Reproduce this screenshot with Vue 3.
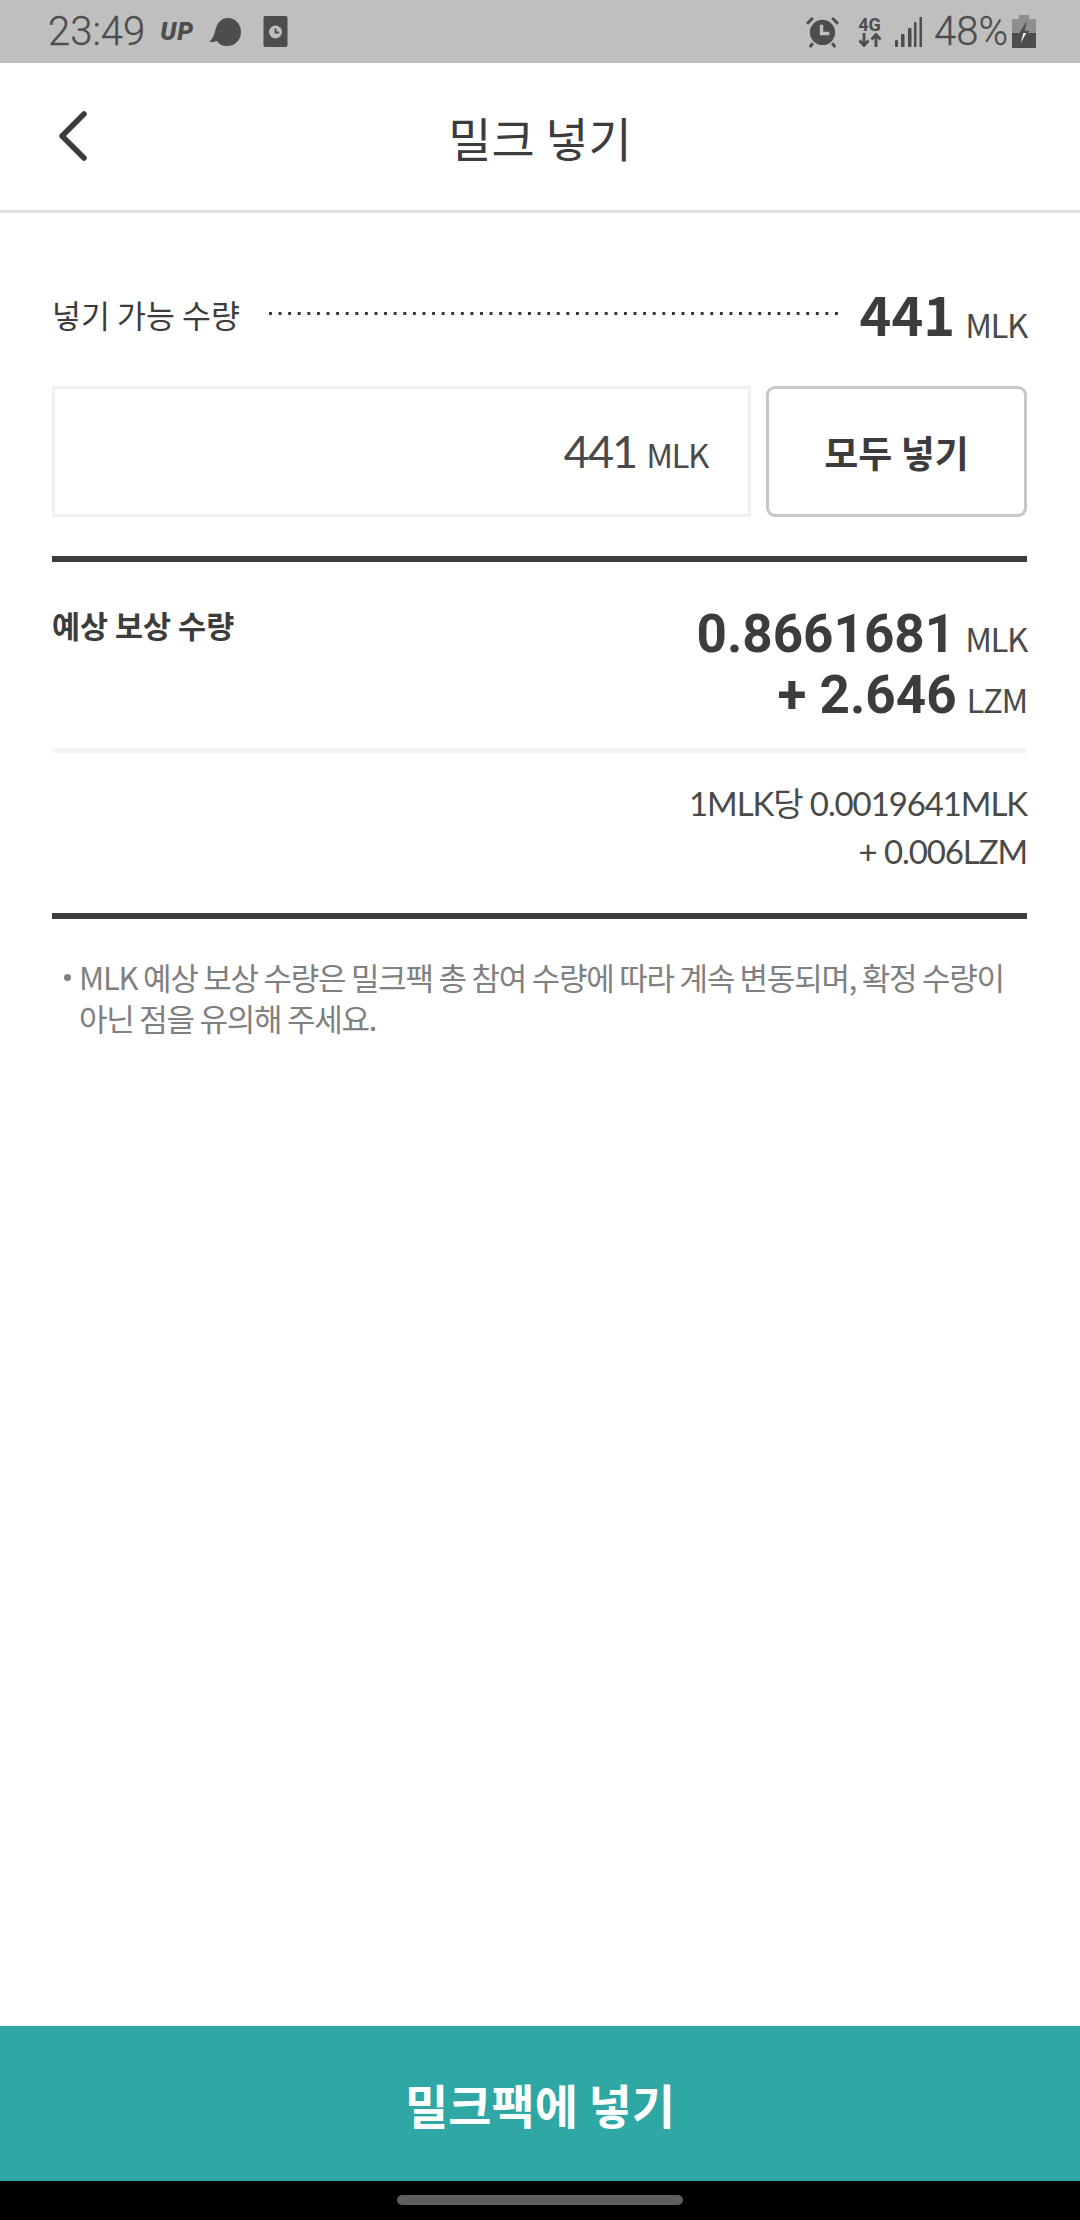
<script setup>
const note = "MLK 예상 보상 수량은 밀크팩 총 참여 수량에 따라 계속 변동되며, 확정 수량이 아닌 점을 유의해 주세요.";
</script>

<template>
  <div class="page">
    <div class="status">
      <div class="status-left">
        <span class="time">23:49</span>
        <span class="up">UP</span>
        <svg class="ic-chat" width="34" height="30" viewBox="0 0 34 30">
          <path d="M1 25 C5 22 6 18 8 11 C10 4 15 1 20 1 C27 1 33 7 33 15 C33 23 27 29 19 29 C14 29 11 27 9 24 C6 25 3 25 1 25 Z" fill="#4d4d4d" />
        </svg>
        <svg class="ic-clock" width="25" height="32" viewBox="0 0 24 32">
          <rect x="0" y="0" width="24" height="31" rx="2" fill="#4d4d4d" />
          <circle cx="12" cy="16" r="6.5" fill="#bfbfbf" />
          <path d="M12 12.5 V16.5 H15.5" fill="none" stroke="#4d4d4d" stroke-width="1.8" />
        </svg>
      </div>
      <div class="status-right">
        <svg class="ic-alarm" width="33" height="33" viewBox="0 0 34 34">
          <circle cx="17" cy="18" r="13" fill="#4d4d4d" />
          <path d="M1 9 L7 3 M33 9 L27 3 M7 29 L4 33 M27 29 L30 33" stroke="#4d4d4d" stroke-width="3" fill="none" />
          <path d="M16 10 V19 H24" fill="none" stroke="#bfbfbf" stroke-width="3.5" />
        </svg>
        <div class="net">
          <span class="net-4g">4G</span>
          <svg width="24" height="14" viewBox="0 0 24 14">
            <path d="M6 0 V12 M1.5 7.5 L6 12.5 L10.5 7.5 M18 14 V2 M13.5 6.5 L18 1.5 L22.5 6.5" fill="none" stroke="#4d4d4d" stroke-width="2.8" />
          </svg>
        </div>
        <svg class="ic-signal" width="27" height="30" viewBox="0 0 27 30">
          <rect x="0" y="23" width="3" height="7" rx="1" fill="#4d4d4d" />
          <rect x="6" y="17" width="3.5" height="13" rx="1" fill="#4d4d4d" />
          <rect x="13" y="11" width="3.5" height="19" rx="1" fill="#4d4d4d" />
          <rect x="19" y="5" width="2.5" height="25" fill="#4d4d4d" />
          <rect x="24.5" y="0" width="2.5" height="30" fill="#4d4d4d" />
        </svg>
        <span class="pct">48%</span>
        <svg class="ic-batt" width="24" height="33" viewBox="0 0 21 33" preserveAspectRatio="none">
          <path d="M6 0 H15 V4 H21 V18 H0 V4 H6 Z" fill="#8f8f8f" />
          <path d="M0 18 H21 V32 Q21 33 20 33 H1 Q0 33 0 32 Z" fill="#4d4d4d" />
          <path d="M13 6 L6 19 H10 L7 30 L15 16 H11 Z" fill="#4d4d4d" />
          <path d="M10 18 H12.5 L7.5 28 Z" fill="#fff" />
        </svg>
      </div>
    </div>

    <header class="header">
      <svg class="back" width="32" height="52" viewBox="0 0 32 52">
        <path d="M27 4 L5 26 L27 48" fill="none" stroke="#3c3c3c" stroke-width="5.5" stroke-linecap="round" stroke-linejoin="round" />
      </svg>
      <h1 class="title">밀크 넣기</h1>
    </header>

    <main class="content">
      <div class="avail">
        <span class="avail-label">넣기 가능 수량</span>
        <span class="leader"></span>
        <span class="amount"><b class="big avail-num">441</b><span class="unit">MLK</span></span>
      </div>

      <div class="entry">
        <div class="input"><span class="input-num plex">441</span><span class="unit">MLK</span></div>
        <button class="all">모두 넣기</button>
      </div>

      <section class="estimate">
        <div class="reward">
          <span class="reward-label">예상 보상 수량</span>
          <div class="reward-values">
            <div class="amount"><b class="big">0.8661681</b><span class="unit">MLK</span></div>
            <div class="amount"><b class="big">+ 2.646</b><span class="unit">LZM</span></div>
          </div>
        </div>
        <div class="rate plex">
          <div>1MLK당 0.0019641MLK</div>
          <div>+ 0.006LZM</div>
        </div>
      </section>

      <p class="note"><span class="dot"></span><span>{{ note }}</span></p>
    </main>

    <button class="submit">밀크팩에 넣기</button>
    <div class="navbar"><span class="pill"></span></div>
  </div>
</template>

<style>
body {
  margin: 0;
  background: #fff;
}
</style>

<style scoped>
.page {
  width: 1080px;
  height: 2220px;
  display: flex;
  flex-direction: column;
  font-family: "Noto Sans CJK KR", "Noto Sans", sans-serif;
  color: #3c3c3c;
  background: #fff;
}

/* status bar */
.status {
  height: 63px;
  flex: none;
  background: #bfbfbf;
  display: flex;
  justify-content: space-between;
  align-items: center;
  padding: 0 44px 0 48px;
  color: #4d4d4d;
}
.status-left,
.status-right {
  display: flex;
  align-items: center;
}
.time,
.pct {
  font-family: Roboto, sans-serif;
  font-size: 40px;
  font-weight: 300;
  line-height: 63px;
  -webkit-text-stroke: 0.3px #4d4d4d;
}
.up {
  font-family: Roboto, sans-serif;
  font-size: 25px;
  font-weight: 900;
  font-style: italic;
  letter-spacing: 1px;
  margin-left: 15px;
}
.ic-chat {
  margin-left: 14px;
}
.ic-clock {
  margin-left: 21px;
}
.ic-alarm {
  margin-right: 18px;
}
.net {
  display: flex;
  flex-direction: column;
  align-items: center;
  width: 25px;
  margin-right: 13px;
}
.net-4g {
  font-family: Roboto, sans-serif;
  font-size: 18px;
  font-weight: 700;
  line-height: 17px;
}
.ic-signal {
  margin-right: 12px;
}
.pct {
  margin-right: 4px;
}

/* header */
.header {
  height: 147px;
  flex: none;
  position: relative;
  display: flex;
  align-items: center;
  justify-content: center;
  border-bottom: 3px solid #e2e2e2;
}
.back {
  position: absolute;
  left: 57px;
  top: 47px;
}
.title {
  margin: 0;
  font-size: 47px;
  font-weight: 400;
  line-height: 1;
}

/* body */
.content {
  flex: 1;
  padding: 0 53px 0 52px;
  display: flex;
  flex-direction: column;
}
.avail {
  display: flex;
  align-items: center;
  height: 100px;
  margin-top: 51px;
}
.avail-label {
  font-size: 31.5px;
}
.leader {
  flex: 1;
  height: 3px;
  margin: 0 16px 0 29px;
  position: relative;
  top: -1px;
  background-image: linear-gradient(to right, #333 3px, transparent 3px);
  background-size: 9.6px 3px;
  background-repeat: repeat-x;
}
.amount {
  display: flex;
  justify-content: flex-end;
  align-items: baseline;
  gap: 10px;
  white-space: nowrap;
}
.big {
  font-family: Roboto, sans-serif;
  font-size: 53px;
  font-weight: 700;
  line-height: 61px;
}
.avail-num {
  font-family: inherit;
  font-size: 54px;
  position: relative;
  top: -2px;
}
.unit {
  font-size: 33px;
  letter-spacing: -1.4px;
  line-height: 40px;
  color: #4a4a4a;
}
.plex {
  font-family: Lato, "Noto Sans CJK KR", sans-serif;
  font-weight: 400;
}

.entry {
  display: flex;
  gap: 15px;
  margin-top: 22px;
}
.input {
  width: 699px;
  height: 131px;
  box-sizing: border-box;
  border: 3px solid #f0f0f0;
  display: flex;
  align-items: baseline;
  justify-content: flex-end;
  gap: 10px;
  padding: 35px 40px 0 0;
}
.input-num {
  font-size: 45px;
  letter-spacing: -2px;
  color: #4a4a4a;
}
.all {
  flex: 1;
  height: 131px;
  box-sizing: border-box;
  background: #fff;
  border: 3px solid #c6c6c6;
  border-radius: 9px;
  font-family: inherit;
  font-size: 37px;
  font-weight: 700;
  color: #3c3c3c;
  padding: 0;
}

.estimate {
  margin-top: 39px;
  border-top: 6px solid #3c3c3c;
  border-bottom: 6px solid #3c3c3c;
  height: 363px;
  box-sizing: border-box;
}
.reward {
  display: flex;
  justify-content: space-between;
  height: 191px;
  border-bottom: 5px solid #f4f4f4;
  padding-top: 42px;
  box-sizing: border-box;
}
.reward-label {
  font-size: 30.5px;
  font-weight: 700;
  line-height: 42px;
}
.rate {
  margin-top: 26px;
  text-align: right;
  font-size: 33px;
  line-height: 48px;
  letter-spacing: -1.1px;
  color: #4a4a4a;
}

.note {
  margin: 37px 0 0 12px;
  display: flex;
  gap: 8px;
  font-size: 31px;
  line-height: 41px;
  color: #808080;
  letter-spacing: -1.25px;
}
.dot {
  width: 7px;
  height: 7px;
  border-radius: 50%;
  background: #808080;
  flex: none;
  margin-top: 18px;
}

/* bottom */
.submit {
  height: 155px;
  flex: none;
  border: 0;
  padding: 0;
  background: #2fa8a5;
  color: #fff;
  font-family: inherit;
  font-size: 47px;
  font-weight: 700;
}
.navbar {
  height: 39px;
  flex: none;
  background: #000;
  display: flex;
  justify-content: center;
  padding-top: 14px;
  box-sizing: border-box;
}
.pill {
  width: 286px;
  height: 10px;
  border-radius: 5px;
  background: #5f5f5f;
}
</style>
